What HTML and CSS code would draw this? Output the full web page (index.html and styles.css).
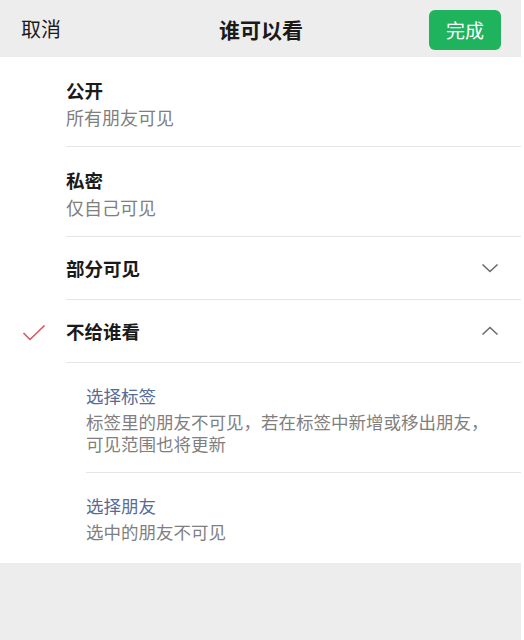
FILE: index.html
```html
<!DOCTYPE html>
<html lang="zh-CN">
<head>
    <meta charset="UTF-8">
    <meta name="viewport" content="width=device-width, initial-scale=1.0">
    <title>谁可以看</title>
    <link rel="stylesheet" href="styles.css">
</head>
<body>
    <div class="page">
        <header class="topbar">
            <span class="cancel">取消</span>
            <h1 class="title">谁可以看</h1>
            <button class="done">完成</button>
        </header>

        <ul class="options">
            <li class="option">
                <span class="mark"></span>
                <div class="option-body">
                    <div class="option-title">公开</div>
                    <div class="option-desc">所有朋友可见</div>
                </div>
            </li>
            <li class="option">
                <span class="mark"></span>
                <div class="option-body">
                    <div class="option-title">私密</div>
                    <div class="option-desc">仅自己可见</div>
                </div>
            </li>
            <li class="option single">
                <span class="mark"></span>
                <div class="option-body">
                    <div class="option-title">部分可见</div>
                    <svg class="arrow" width="18" height="10" viewBox="0 0 18 10">
                        <polyline points="1.5,1.5 9,8.5 16.5,1.5" fill="none" stroke="#6b6b6b" stroke-width="1.6"/>
                    </svg>
                </div>
            </li>
            <li class="option single">
                <span class="mark">
                    <svg width="24" height="18" viewBox="0 0 24 18">
                        <polyline points="1.5,9 8,15.5 22.5,1.5" fill="none" stroke="#d9535f" stroke-width="1.6"/>
                    </svg>
                </span>
                <div class="option-body">
                    <div class="option-title">不给谁看</div>
                    <svg class="arrow" width="18" height="10" viewBox="0 0 18 10">
                        <polyline points="1.5,8.5 9,1.5 16.5,8.5" fill="none" stroke="#6b6b6b" stroke-width="1.6"/>
                    </svg>
                </div>
            </li>
        </ul>

        <ul class="sublist">
            <li class="subitem">
                <div class="sub-title">选择标签</div>
                <div class="sub-desc">标签里的朋友不可见，若在标签中新增或移出朋友，<br>可见范围也将更新</div>
            </li>
            <li class="subitem">
                <div class="sub-title">选择朋友</div>
                <div class="sub-desc">选中的朋友不可见</div>
            </li>
        </ul>

        <div class="footer"></div>
    </div>
</body>
</html>
```

FILE: styles.css
```css
* {
    margin: 0;
    padding: 0;
    box-sizing: border-box;
}

body {
    font-family: "Noto Sans CJK SC", "Noto Sans", sans-serif;
    background-color: #fff;
    color: #1a1a1a;
}

.page {
    width: 521px;
    height: 640px;
    display: flex;
    flex-direction: column;
    background-color: #fff;
}

/* Top bar */
.topbar {
    height: 57px;
    background-color: #ededed;
    display: grid;
    grid-template-columns: 1fr auto 1fr;
    align-items: center;
    padding: 0 20px 0 21px;
}

.cancel {
    font-size: 20px;
    color: #1a1a1a;
}

.title {
    font-size: 21px;
    font-weight: 700;
    color: #1a1a1a;
}

.done {
    justify-self: end;
    width: 72px;
    height: 40px;
    margin-top: 2px;
    border: none;
    border-radius: 6px;
    background-color: #1fb35d;
    color: #fff;
    font-family: inherit;
    font-size: 19px;
}

/* Option list */
.options, .sublist {
    list-style: none;
}

.option {
    display: flex;
}

.mark {
    width: 66px;
    flex-shrink: 0;
    display: flex;
    align-items: center;
    padding-left: 22px;
}

.option-body {
    flex: 1;
    padding: 20px 0 17px;
    border-bottom: 1px solid #e6e6e6;
}

.option-title {
    font-size: 18.5px;
    font-weight: 700;
    line-height: 26px;
}

.option-desc {
    margin-top: 2px;
    font-size: 18px;
    line-height: 24px;
    color: #7f7f7f;
}

.option.single .option-body {
    height: 63px;
    padding: 0 22px 0 0;
    display: flex;
    align-items: center;
    justify-content: space-between;
}

.option.single .mark {
    padding-top: 2px;
}

/* Sub options */
.sublist {
    padding-left: 86px;
}

.subitem {
    padding: 20px 0 17px;
    border-bottom: 1px solid #e6e6e6;
}

.subitem:last-child {
    border-bottom: none;
    padding-bottom: 20px;
}

.sub-title {
    font-size: 17.5px;
    line-height: 26px;
    color: #576b95;
}

.sub-desc {
    margin-top: 2px;
    font-size: 17.5px;
    line-height: 22px;
    color: #7f7f7f;
}

.footer {
    flex: 1;
    background-color: #ededed;
}
```
